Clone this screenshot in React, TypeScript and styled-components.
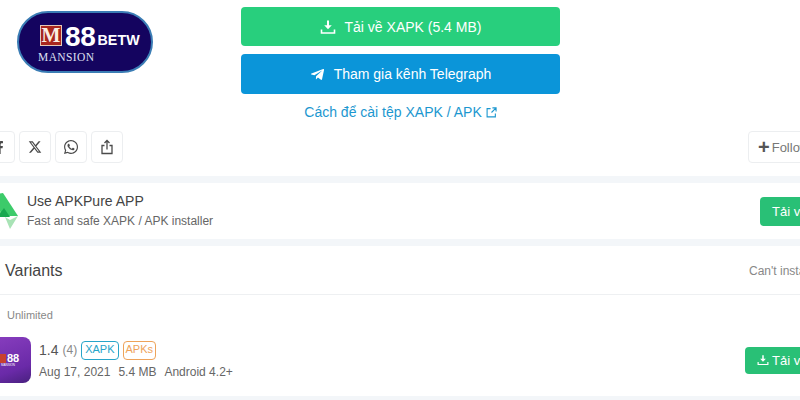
import { FaFacebookF, FaTelegramPlane, FaWhatsapp } from "react-icons/fa";
import { FaXTwitter } from "react-icons/fa6";
import styled, { createGlobalStyle } from "styled-components";

const GlobalStyle = createGlobalStyle`
    html, body {
        margin: 0;
        background: #f3f6f9;
        font-family: "Liberation Sans", Arial, sans-serif;
    }
`;

const Viewport = styled.div`
    width: 800px;
    height: 400px;
    overflow: hidden;
`;

/* the screenshot is cropped on both sides, so the page is wider than the window */
const Page = styled.main`
    width: 920px;
    margin-left: -40px;
    display: flex;
    flex-direction: column;
    gap: 7px;
`;

const Card = styled.section`
    background: #fff;
`;

const TopCard = styled(Card)`
    height: 176px;
    padding: 7px 40px 0;
    box-sizing: border-box;
`;

const Hero = styled.div`
    display: grid;
    grid-template-columns: 241px 319px;
    height: 124px;
`;

const Logo = styled.div`
    width: 136px;
    height: 62px;
    margin: 4px 0 0 17px;
    box-sizing: border-box;
    border: 2px solid #3b7db5;
    border-radius: 31px;
    background: #14045f;
    color: #fff;
    display: grid;
    grid-template-columns: 23px auto auto;
    grid-template-rows: 26px 14px;
    justify-content: start;
    column-gap: 2px;
    padding: 12px 0 0 21px;
`;

const LogoMark = styled.span`
    background: #a9271d;
    border: 1px solid #e3c9b8;
    height: 21px;
    margin-right: 1px;
    box-sizing: border-box;
    color: #fbeee2;
    font: 700 20px/19px "Liberation Serif", serif;
    text-align: center;
    overflow: hidden;
`;

const LogoNum = styled.span`
    font: 700 28px/24px "Liberation Sans", sans-serif;
    letter-spacing: -0.3px;
`;

const LogoTail = styled.span`
    font: 700 14.3px/15px "Liberation Sans", sans-serif;
    margin-top: 8px;
`;

const LogoSub = styled.span`
    grid-column: 1 / 4;
    margin-left: -2px;
    font: 400 11.5px/13px "Liberation Serif", serif;
    letter-spacing: 0.4px;
    color: #dfe0f2;
`;

const Actions = styled.div`
    display: flex;
    flex-direction: column;
    gap: 8px;
`;

const BigButton = styled.a<{ $bg: string; $h: number }>`
    height: ${(p) => p.$h}px;
    border-radius: 4px;
    background: ${(p) => p.$bg};
    color: #fff;
    font-size: 14px;
    display: flex;
    align-items: center;
    justify-content: center;
    gap: 9px;
`;

const GuideLink = styled.a`
    color: #1c97cf;
    font-size: 14px;
    display: flex;
    justify-content: center;
    align-items: center;
    gap: 4px;
    height: 20px;
`;

const ShareRow = styled.div`
    display: flex;
    justify-content: space-between;
    margin-left: -17px;
`;

const ShareGroup = styled.div`
    display: flex;
    gap: 4px;
`;

const ShareButton = styled.button`
    width: 32px;
    height: 32px;
    padding: 0;
    box-sizing: border-box;
    background: #fff;
    border: 1px solid #eceef0;
    border-radius: 4px;
    color: #4a4a4a;
    display: flex;
    align-items: center;
    justify-content: center;
`;

const FollowButton = styled.button`
    width: 92px;
    height: 32px;
    padding: 0 0 0 9px;
    box-sizing: border-box;
    background: #fff;
    border: 1px solid #eceef0;
    border-radius: 4px;
    color: #777;
    font: 13px "Liberation Sans", sans-serif;
    display: flex;
    align-items: center;
    gap: 2px;
    text-align: left;
`;

const PlusMark = styled.span`
    color: #555;
    font-size: 20px;
    font-weight: 700;
    line-height: 20px;
`;

const PromoCard = styled(Card)`
    height: 56px;
    display: flex;
    align-items: center;
    justify-content: space-between;
    padding-left: 27px;
`;

const PromoLeft = styled.div`
    display: flex;
    align-items: center;
    gap: 9px;
`;

const PromoTitle = styled.div`
    font-size: 14px;
    line-height: 18px;
    color: #444;
`;

const PromoSub = styled.div`
    font-size: 12px;
    line-height: 16px;
    margin: 3px 0 2px;
    color: #666;
`;

const GreenButton = styled.a<{ $w: number; $h: number }>`
    width: ${(p) => p.$w}px;
    height: ${(p) => p.$h}px;
    border-radius: 4px;
    background: #29c076;
    color: #fff;
    font-size: 13px;
    display: flex;
    align-items: center;
    padding-left: 12px;
    box-sizing: border-box;
    gap: 3px;
`;

const VariantsCard = styled(Card)`
    height: 150px;
`;

const VariantsHead = styled.div`
    height: 47px;
    padding-top: 1px;
    border-bottom: 1px solid #eef0f2;
    display: flex;
    align-items: center;
    justify-content: space-between;
    padding-left: 45px;
`;

const VariantsTitle = styled.h2`
    margin: 0;
    font-size: 16px;
    font-weight: 400;
    color: #444;
`;

const HelpLink = styled.span`
    font-size: 12px;
    color: #888;
    width: 131px;
`;

const VariantLabel = styled.div`
    font-size: 11px;
    color: #888;
    padding: 14px 0 0 47px;
    line-height: 13px;
`;

const VariantRow = styled.div`
    display: flex;
    align-items: center;
    justify-content: space-between;
    margin-top: 15px;
    padding-left: 25px;
`;

const VariantLeft = styled.div`
    display: flex;
    align-items: center;
    gap: 8px;
`;

const VariantInfo = styled.div`
    margin-bottom: 2px;
`;

const AppIcon = styled.div`
    width: 46px;
    height: 46px;
    border-radius: 8px;
    background: linear-gradient(160deg, #8a3fc0, #6a2aa8 70%, #48207e);
    display: flex;
    flex-direction: column;
    align-items: center;
    justify-content: center;
    color: #fff;
    font-weight: 700;
    font-size: 11px;
    line-height: 10px;
`;

const AppIconLine = styled.div`
    display: flex;
    align-items: center;
    gap: 1px;
`;

const AppIconChip = styled.span`
    width: 9px;
    height: 9px;
    background: #c9402f;
`;

const AppIconSub = styled.span`
    font-size: 3px;
    line-height: 4px;
    font-weight: 400;
`;

const VersionLine = styled.div`
    display: flex;
    align-items: center;
    gap: 4px;
    height: 22px;
`;

const Version = styled.span`
    font-size: 14px;
    color: #555;
`;

const Count = styled.span`
    font-size: 12px;
    color: #888;
`;

const Tag = styled.span<{ $c: string; $pad: number }>`
    height: 19px;
    box-sizing: border-box;
    padding: 0 ${(p) => p.$pad}px;
    border: 1px solid ${(p) => p.$c};
    border-radius: 4px;
    color: ${(p) => p.$c};
    font-size: 11px;
    line-height: 15px;
`;

const MetaLine = styled.div`
    display: flex;
    gap: 8px;
    font-size: 12px;
    color: #666;
    margin-top: 4px;
`;

const TrayIcon = ({ size }: { size: number }) => (
    <svg width={size} height={size} viewBox="0 0 16 16" fill="none">
        <path d="M8 1.5v6.5" stroke="#fff" strokeWidth="2" />
        <path d="M4.2 6.2 8 10.2l3.8-4z" fill="#fff" />
        <path d="M1.5 10.5v3.5h13v-3.5" stroke="#fff" strokeWidth="1.6" />
    </svg>
);

const OutLinkIcon = () => (
    <svg width="11" height="11" viewBox="0 0 12 12" fill="none" stroke="#1c97cf" strokeWidth="1.2">
        <path d="M5 1.8H1.2v9h9V7" />
        <path d="M7 1h4v4M11 1 6 6" />
    </svg>
);

const ShareIcon = () => (
    <svg width="14" height="16" viewBox="0 0 14 16" fill="none" stroke="#4a4a4a" strokeWidth="1.3">
        <path d="M4.5 6.5H2v8h10v-8H9.5" />
        <path d="M7 10.500V1.500M4.500 4 7 1.500 9.500 4" />
    </svg>
);

const ApkLogo = () => (
    <svg width="31" height="36" viewBox="0 0 31 36">
        <path d="M10 1 16 0 31 23H14z" fill="#3ccb6a" />
        <path d="M10 1 14 23H0z" fill="#62d56f" />
        <path d="M10 24h13l-6-9z" fill="#18a84f" />
        <path d="M18 24l5 3 8-4-8 13z" fill="#a9e3b6" />
    </svg>
);

const App = () => {
    return (
        <Viewport>
            <GlobalStyle />
            <Page>
                <TopCard>
                    <Hero>
                        <Logo>
                            <LogoMark>M</LogoMark>
                            <LogoNum>88</LogoNum>
                            <LogoTail>BETW</LogoTail>
                            <LogoSub>MANSION</LogoSub>
                        </Logo>
                        <Actions>
                            <BigButton $bg="#28cf7d" $h={39}>
                                <TrayIcon size={16} />
                                Tải về XAPK (5.4 MB)
                            </BigButton>
                            <BigButton $bg="#0b95d9" $h={40}>
                                <FaTelegramPlane size={15} />
                                Tham gia kênh Telegraph
                            </BigButton>
                            <GuideLink>
                                Cách để cài tệp XAPK / APK
                                <OutLinkIcon />
                            </GuideLink>
                        </Actions>
                    </Hero>
                    <ShareRow>
                        <ShareGroup>
                            <ShareButton><FaFacebookF size={13} /></ShareButton>
                            <ShareButton><FaXTwitter size={14} /></ShareButton>
                            <ShareButton><FaWhatsapp size={16} /></ShareButton>
                            <ShareButton><ShareIcon /></ShareButton>
                        </ShareGroup>
                        <FollowButton>
                            <PlusMark>+</PlusMark>
                            Follow
                        </FollowButton>
                    </ShareRow>
                </TopCard>
                <PromoCard>
                    <PromoLeft>
                        <ApkLogo />
                        <div>
                            <PromoTitle>Use APKPure APP</PromoTitle>
                            <PromoSub>Fast and safe XAPK / APK installer</PromoSub>
                        </div>
                    </PromoLeft>
                    <GreenButton $w={120} $h={29}>Tải về</GreenButton>
                </PromoCard>
                <VariantsCard>
                    <VariantsHead>
                        <VariantsTitle>Variants</VariantsTitle>
                        <HelpLink>Can't install?</HelpLink>
                    </VariantsHead>
                    <VariantLabel>Unlimited</VariantLabel>
                    <VariantRow>
                        <VariantLeft>
                            <AppIcon>
                                <AppIconLine>
                                    <AppIconChip />
                                    88
                                </AppIconLine>
                                <AppIconSub>MANSION</AppIconSub>
                            </AppIcon>
                            <VariantInfo>
                                <VersionLine>
                                    <Version>1.4</Version>
                                    <Count>(4)</Count>
                                    <Tag $c="#27a5c9" $pad={3}>XAPK</Tag>
                                    <Tag $c="#eea35a" $pad={2}>APKs</Tag>
                                </VersionLine>
                                <MetaLine>
                                    <span>Aug 17, 2021</span>
                                    <span>5.4 MB</span>
                                    <span>Android 4.2+</span>
                                </MetaLine>
                            </VariantInfo>
                        </VariantLeft>
                        <GreenButton $w={135} $h={27}>
                            <TrayIcon size={12} />
                            Tải về
                        </GreenButton>
                    </VariantRow>
                </VariantsCard>
            </Page>
        </Viewport>
    );
};

export default App;
